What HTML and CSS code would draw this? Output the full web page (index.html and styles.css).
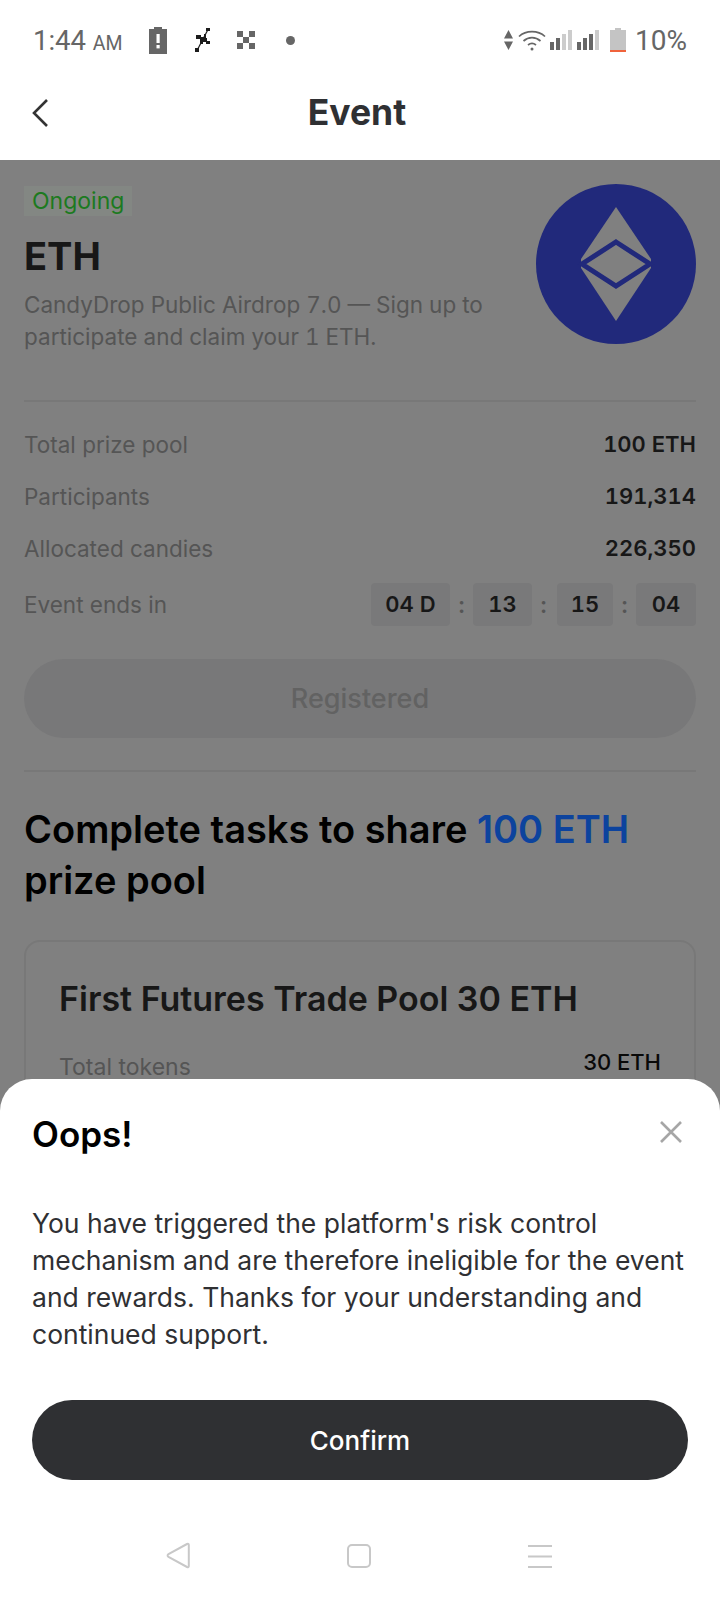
FILE: index.html
```html
<!DOCTYPE html>
<html lang="en">
<head>
<meta charset="UTF-8">
<title>Event</title>
<link rel="stylesheet" href="styles.css">
</head>
<body>
<div class="phone">
  <div class="statusbar">
    <div class="status-left">
      <span class="time">1:44 <small>AM</small></span>
      <svg class="ic-batt" width="18" height="27" viewBox="0 0 18 27"><path d="M5 0h8v2h5v25H0V2h5z" fill="#666"/><rect x="7.500" y="7" width="3.200" height="9" fill="#fff"/><rect x="7.500" y="18" width="3.200" height="3.400" fill="#fff"/></svg>
      <svg class="ic-x" width="16" height="24" viewBox="0 0 16 24"><path d="M13 1.500L2 22.500" stroke="#1c1c1c" stroke-width="1.200"/><path d="M11 0h4v3h-4zM0 20h4v4H0zM1 7h5v2h3v-3h2v4h1v3h3v3h-4v-2H8v2H5v-5H1z" fill="#1c1c1c"/></svg>
      <svg class="ic-check" width="18" height="18" viewBox="0 0 18 18"><path d="M0 0h6v6H0zM12 0h6v6h-6zM6 6h6v6H6zM0 12h6v6H0zM12 12h6v6h-6z" fill="#666"/></svg>
      <span class="dot"></span>
    </div>
    <div class="status-right">
      <svg class="ic-arrows" width="9" height="20" viewBox="0 0 9 20"><path d="M4.500 0L9 8.500H0zM0 11.500h9L4.500 20z" fill="#666"/></svg>
      <svg class="ic-wifi" width="28" height="22" viewBox="0 0 28 22"><g fill="none" stroke="#666" stroke-width="1.700"><path d="M1 7.500C8 1 20 1 27 7.500"/><path d="M5.500 12C10.500 7.500 17.500 7.500 22.500 12"/><path d="M10 16c2.500-2 5.500-2 8 0"/></g><circle cx="14" cy="20" r="1.500" fill="#666"/></svg>
      <svg class="ic-signal" width="23" height="20" viewBox="0 0 23 20"><path d="M0 12h4v8H0zM6 8h4v12H6z" fill="#666"/><path d="M12 4h4v16h-4zM18 0h4v20h-4z" fill="#ccc"/></svg>
      <svg class="ic-signal" width="23" height="20" viewBox="0 0 23 20"><path d="M0 12h4v8H0zM6 8h4v12H6zM12 4h4v16h-4z" fill="#666"/><path d="M18 0h4v20h-4z" fill="#ccc"/></svg>
      <svg class="ic-level" width="16" height="24" viewBox="0 0 16 24"><path d="M5 0h6v2h5v20H0V2h5z" fill="#c4c4c4"/><rect y="22" width="16" height="2" fill="#f0633c"/></svg>
      <span class="percent">10%</span>
    </div>
  </div>

  <header class="navbar">
    <svg class="back" width="18" height="30" viewBox="0 0 18 30"><path d="M16 2L3 15l13 13" fill="none" stroke="#333" stroke-width="2.600"/></svg>
    <h1>Event</h1>
  </header>

  <main class="content">
    <section class="intro">
      <div class="intro-text">
        <span class="tag">Ongoing</span>
        <h2>ETH</h2>
        <p>CandyDrop Public Airdrop 7.0 — Sign up to participate and claim your 1 ETH.</p>
      </div>
      <svg class="coin" width="160" height="160" viewBox="0 0 160 160">
        <circle cx="80" cy="80" r="80" fill="#21297b"/>
        <path d="M80 23L115 75v9L80 137 45 84v-9z" fill="#808080"/>
        <path d="M80 58l34 22-34 22-34-22z" fill="#808080" stroke="#21297b" stroke-width="5"/>
      </svg>
    </section>

    <section class="stats">
      <div class="row"><span>Total prize pool</span><b>100 ETH</b></div>
      <div class="row"><span>Participants</span><b>191,314</b></div>
      <div class="row"><span>Allocated candies</span><b>226,350</b></div>
      <div class="row row-timer">
        <span>Event ends in</span>
        <div class="timer">
          <b class="cell cell-day">04 D</b><i>:</i><b class="cell cell-h">13</b><i>:</i><b class="cell cell-m">15</b><i>:</i><b class="cell cell-s">04</b>
        </div>
      </div>
      <button class="registered" type="button">Registered</button>
    </section>

    <section class="tasks">
      <h2 class="tasks-title">Complete tasks to share <em>100 ETH</em> prize pool</h2>
      <div class="pool">
        <h3>First Futures Trade Pool 30 ETH</h3>
        <div class="pool-row"><span>Total tokens</span><b>30 ETH</b></div>
      </div>
    </section>
  </main>

  <div class="sheet">
    <div class="sheet-head">
      <h2>Oops!</h2>
      <svg class="close" width="24" height="24" viewBox="0 0 24 24"><path d="M2 2l20 20M22 2L2 22" stroke="#a6a6a6" stroke-width="2.600" fill="none"/></svg>
    </div>
    <p>You have triggered the platform's risk control mechanism and are therefore ineligible for the event and rewards. Thanks for your understanding and continued support.</p>
    <button class="confirm" type="button">Confirm</button>
    <nav class="softkeys">
      <svg width="24" height="27" viewBox="0 0 24 27"><path d="M21 2L2.500 12c-1.200.8-1.200 2 0 2.800L21 25c1 .4 1.800 0 1.800-1V3c0-1-.8-1.400-1.800-1z" fill="none" stroke="#c8c8c8" stroke-width="2"/></svg>
      <svg width="24" height="24" viewBox="0 0 24 24"><rect x="1" y="1" width="22" height="22" rx="4" fill="none" stroke="#c8c8c8" stroke-width="2"/></svg>
      <svg width="24" height="24" viewBox="0 0 24 24"><path d="M0 2h24M0 12.500h24M0 23h24" stroke="#c8c8c8" stroke-width="2"/></svg>
    </nav>
  </div>
</div>
</body>
</html>
```
FILE: styles.css
```css
* {
  box-sizing: border-box;
}
html, body {
  margin: 0;
  padding: 0;
}
body {
  font-family: 'Inter', sans-serif;
  background: #fff;
}
.phone {
  position: relative;
  width: 720px;
  height: 1600px;
  overflow: hidden;
  background: #808080;
}

/* status bar */
.statusbar {
  height: 80px;
  display: flex;
  justify-content: space-between;
  align-items: center;
  padding: 0 33px 0 33px;
  font-family: 'Roboto', sans-serif;
  color: #666;
  background: #fff;
}
.status-left, .status-right {
  display: flex;
  align-items: center;
}
.time {
  font-size: 27.500px;
  width: 116px;
}
.time small {
  font-size: 19.500px;
}
.ic-x {
  margin-left: 28px;
}
.ic-check {
  margin-left: 26px;
}
.dot {
  width: 9px;
  height: 9px;
  border-radius: 50%;
  background: #666;
  margin-left: 31px;
}
.ic-wifi {
  margin-left: 5px;
}
.ic-signal {
  margin-left: 4px;
}
.ic-level {
  margin-left: 10px;
}
.percent {
  font-size: 28px;
  margin-left: 9px;
}

/* nav */
.navbar {
  height: 80px;
  padding: 0 6px 16px 0;
  position: relative;
  display: flex;
  align-items: center;
  justify-content: center;
  background: #fff;
}
.navbar h1 {
  margin: 0;
  font-size: 35.500px;
  font-weight: 700;
  color: #2f3033;
}
.back {
  position: absolute;
  left: 31px;
  top: 18px;
}

/* page behind the sheet, colours already dimmed */
.content {
  padding: 26px 24px 0;
}
.intro {
  display: flex;
  justify-content: space-between;
  height: 216px;
  border-bottom: 2px solid #787878;
}
.intro-text {
  width: 480px;
}
.tag {
  display: inline-block;
  height: 30px;
  line-height: 30px;
  padding: 0 8px;
  font-size: 23px;
  color: #1c7a20;
  background: #838783;
}
.intro-text h2 {
  margin: 18px 0 0;
  font-size: 38px;
  line-height: 44px;
  font-weight: 700;
  color: #171717;
}
.intro-text p {
  margin: 11px 0 0;
  font-size: 22.500px;
  line-height: 32px;
  color: #555;
  font-variant-numeric: tabular-nums;
}
.coin {
  margin-top: -2px;
}
.stats {
  padding-top: 16px;
  padding-bottom: 32px;
  border-bottom: 2px solid #787878;
}
.row {
  display: flex;
  justify-content: space-between;
  align-items: center;
  height: 52px;
  font-size: 22.500px;
  color: #555;
}
.row b {
  font-size: 22px;
  font-weight: 600;
  color: #171717;
  font-variant-numeric: tabular-nums;
}
.row-timer {
  height: 43px;
  margin-top: 9px;
}
.timer {
  display: flex;
  align-items: center;
}
.timer i {
  font-style: normal;
  font-weight: 600;
  color: #555;
  width: 23px;
  text-align: center;
}
.cell {
  height: 43px;
  line-height: 43px;
  text-align: center;
  background: #79797a;
  border-radius: 4px;
}
.cell-day {
  width: 79px;
}
.cell-h {
  width: 59px;
}
.cell-m {
  width: 56px;
  margin-left: 2px;
}
.cell-s {
  width: 60px;
}
.registered {
  display: block;
  width: 100%;
  height: 79px;
  margin-top: 33px;
  border: none;
  border-radius: 40px;
  background: #787879;
  color: #626262;
  font-family: inherit;
  font-size: 27px;
  font-weight: 500;
}
.tasks-title {
  margin: 32px 0 0;
  font-size: 38px;
  line-height: 51px;
  font-weight: 600;
  color: #000;
}
.tasks-title em {
  font-style: normal;
  color: #0c439e;
}
.pool {
  margin-top: 34px;
  height: 300px;
  border: 2px solid #787878;
  border-radius: 16px;
  padding: 35px 33px;
}
.pool h3 {
  margin: 0;
  font-size: 34px;
  line-height: 44px;
  font-weight: 600;
  color: #171717;
}
.pool-row {
  display: flex;
  justify-content: space-between;
  align-items: flex-start;
  margin-top: 28px;
  font-size: 23px;
  color: #555;
}
.pool-row span {
  margin-top: 4px;
}
.pool-row b {
  font-size: 22px;
  font-weight: 500;
  color: #090909;
}

/* bottom sheet */
.sheet {
  position: absolute;
  left: 0;
  right: 0;
  bottom: 0;
  height: 521px;
  background: #fff;
  border-radius: 32px 32px 0 0;
  padding: 0 32px;
}
.sheet-head {
  height: 108px;
  padding-top: 2px;
  display: flex;
  justify-content: space-between;
  align-items: center;
  padding-right: 5px;
}
.sheet-head h2 {
  margin: 0;
  font-size: 35px;
  font-weight: 600;
  color: #000;
}
.close {
  margin-top: -4px;
}
.sheet p {
  margin: 18px 0 0;
  font-size: 26.500px;
  line-height: 37px;
  color: #2f3033;
}
.confirm {
  display: block;
  width: 656px;
  height: 80px;
  margin-top: 47px;
  border: none;
  border-radius: 40px;
  background: #2f3033;
  color: #fff;
  font-family: inherit;
  font-size: 26px;
  font-weight: 500;
}
.softkeys {
  display: flex;
  justify-content: space-between;
  align-items: center;
  margin: 62px 136px 0 134px;
}
```
